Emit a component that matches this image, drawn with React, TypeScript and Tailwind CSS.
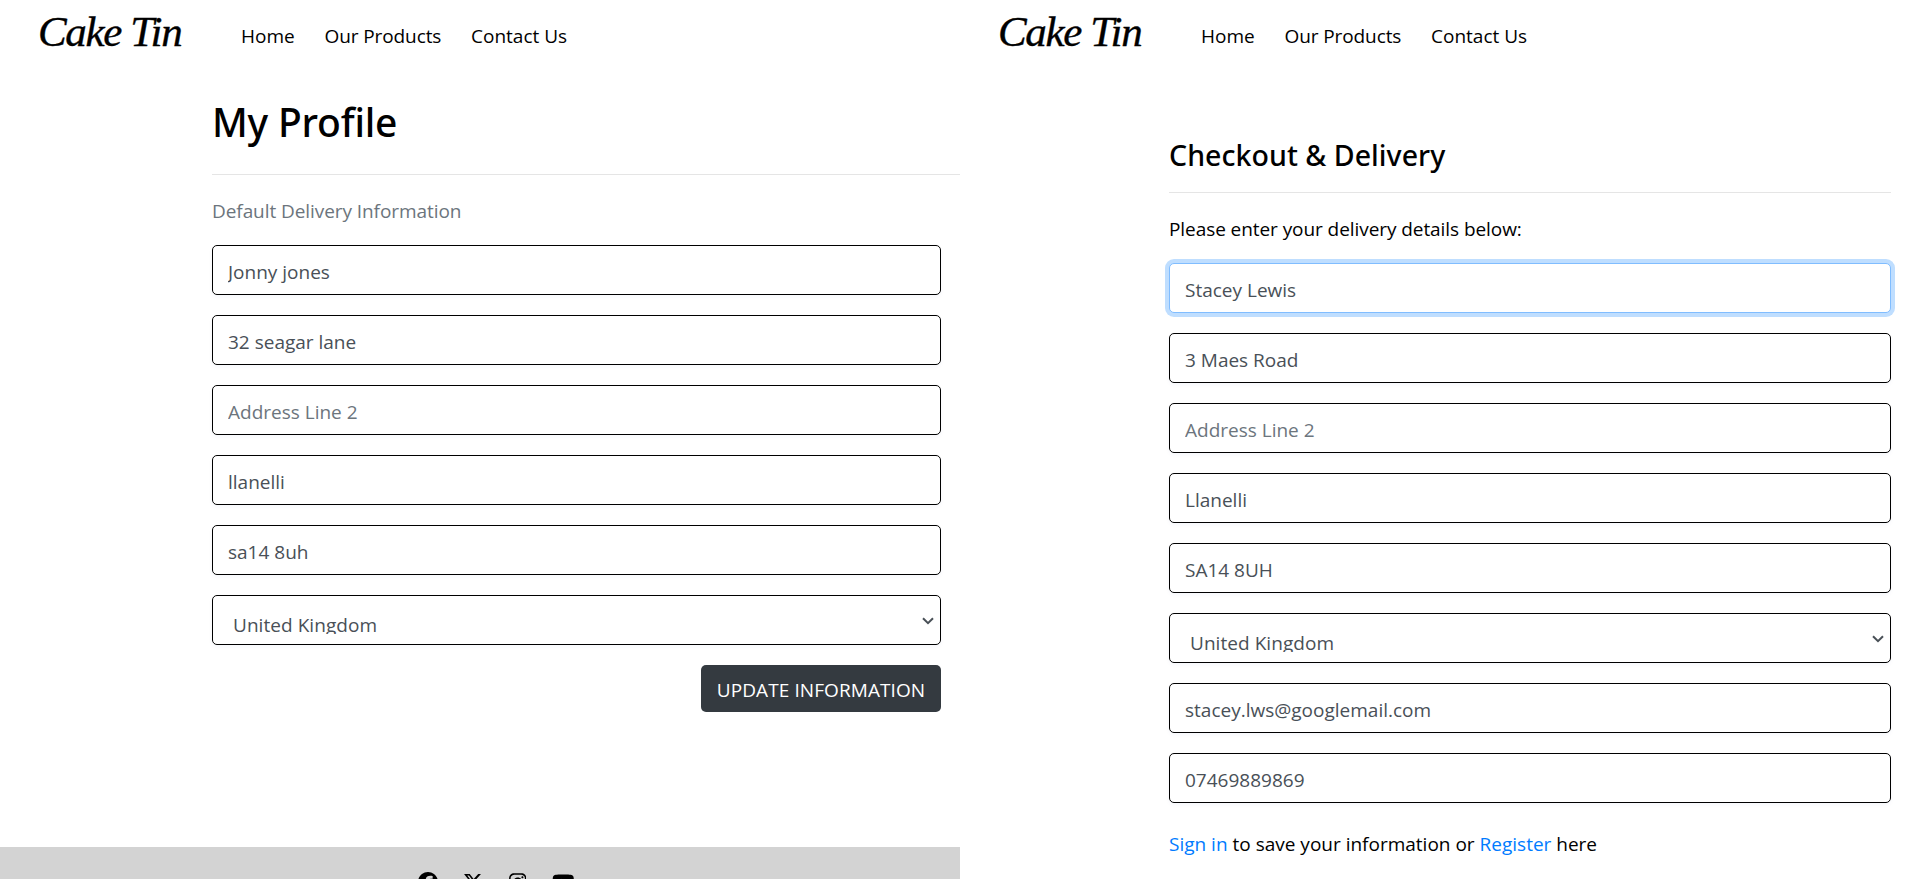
import React from "react";
import { FaFacebook, FaXTwitter, FaInstagram, FaYoutube } from "react-icons/fa6";

function Navbar() {
  return (
    <header className="flex h-[72px] items-start pl-[38px] text-black">
      <a className="mt-[7px] w-[203px] whitespace-nowrap font-['Liberation_Serif',serif] text-[43px] leading-[50px] tracking-[-1.35px] italic [-webkit-text-stroke:0.4px_black]">
        Cake Tin
      </a>
      <nav className="mt-[21px] flex leading-[30px] whitespace-nowrap">
        <a className="w-[83.5px]">Home</a>
        <a className="w-[146.5px] tracking-[-0.1px]">Our Products</a>
        <a>Contact Us</a>
      </nav>
    </header>
  );
}

function Field({
  value,
  placeholder,
  active = false,
}: {
  value?: string;
  placeholder?: string;
  active?: boolean;
}) {
  return (
    <input
      readOnly
      value={value ?? ""}
      placeholder={placeholder}
      className={
        "h-[50px] w-full rounded-[5px] border bg-white px-[15px] pt-[3px] text-[#495057] outline-none placeholder:text-[#6c757d] placeholder:opacity-100 " +
        (active
          ? "border-[#80bdff] shadow-[0_0_0_4px_#bfdeff]"
          : "border-black shadow-[0_2px_4px_rgba(0,60,160,0.04)]")
      }
    />
  );
}

function CountrySelect() {
  return (
    <div className="flex h-[50px] w-full items-start justify-between rounded-[5px] border border-black bg-white pr-[6px] pl-5 text-[#495057] shadow-[0_2px_4px_rgba(0,60,160,0.04)]">
      <span className="mt-[14px] h-[24px] overflow-hidden leading-[30px] tracking-[0.05px]">United Kingdom</span>
      <svg className="mt-[21px] h-2 w-3" viewBox="0 0 12 8" fill="none" stroke="currentColor" strokeWidth="2">
        <path d="M1 1.2L6 6.2L11 1.2" />
      </svg>
    </div>
  );
}

function ProfilePage() {
  return (
    <section className="flex h-full w-[960px] flex-col overflow-hidden">
      <Navbar />
      <main className="flex flex-1 flex-col pl-[212px]">
        <h1 className="mt-[25px] font-['Noto_Sans',sans-serif] text-[39px] leading-[50px] font-medium tracking-[-0.2px] text-black">
          My Profile
        </h1>
        <hr className="mt-[27px] border-t border-[#e5e5e5]" />
        <p className="mt-[21px] leading-[30px] tracking-[-0.07px] text-[#6c757d]">Default Delivery Information</p>
        <form className="mt-[19px] flex w-[729px] flex-col gap-5">
          <Field value="Jonny jones" />
          <Field value="32 seagar lane" />
          <Field placeholder="Address Line 2" />
          <Field value="llanelli" />
          <Field value="sa14 8uh" />
          <CountrySelect />
          <button
            type="button"
            className="h-[47px] w-[240px] self-end rounded-[5px] bg-[#343a40] pt-[3px] tracking-[0.08px] whitespace-nowrap text-white"
          >
            UPDATE INFORMATION
          </button>
        </form>
      </main>
      <footer className="flex h-8 gap-[25.6px] bg-[#d3d3d3] pt-[25px] pl-[417.7px] text-black">
        <FaFacebook className="h-5 w-5 shrink-0" />
        <FaXTwitter className="h-5 w-5 shrink-0" />
        <FaInstagram className="h-5 w-[17.5px] shrink-0" />
        <FaYoutube className="h-5 w-[22.5px] shrink-0" />
      </footer>
    </section>
  );
}

function CheckoutPage() {
  return (
    <section className="flex h-full w-[960px] flex-col overflow-hidden">
      <Navbar />
      <main className="flex flex-col pr-[29px] pl-[209px] text-black">
        <h2 className="mt-[65px] font-['Noto_Sans',sans-serif] text-[28.5px] leading-[36px] font-medium tracking-[0.05px]">
          Checkout &amp; Delivery
        </h2>
        <hr className="mt-[19px] border-t border-[#e5e5e5]" />
        <p className="mt-[21px] leading-[30px] tracking-[-0.07px]">Please enter your delivery details below:</p>
        <form className="mt-[19px] flex flex-col gap-5">
          <Field value="Stacey Lewis" active />
          <Field value="3 Maes Road" />
          <Field placeholder="Address Line 2" />
          <Field value="Llanelli" />
          <Field value="SA14 8UH" />
          <CountrySelect />
          <Field value="stacey.lws@googlemail.com" />
          <Field value="07469889869" />
        </form>
        <p className="mt-[26px] leading-[30px]">
          <a className="text-[#007bff]">Sign in</a> to save your information or{" "}
          <a className="text-[#007bff]">Register</a> here
        </p>
      </main>
    </section>
  );
}

export default function App() {
  return (
    <div className="flex h-[879px] w-[1920px] overflow-hidden bg-white font-['Open_Sans',sans-serif] text-[19px]">
      <ProfilePage />
      <CheckoutPage />
    </div>
  );
}
